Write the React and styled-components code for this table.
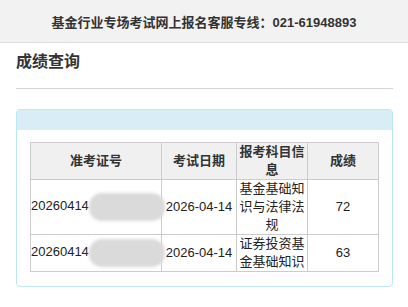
import React from "react";
import styled, { createGlobalStyle } from "styled-components";

const rows = [
  { id: "20260414", date: "2026-04-14", subject: "基金基础知识与法律法规", score: "72" },
  { id: "20260414", date: "2026-04-14", subject: "证券投资基金基础知识", score: "63" },
];

function App() {
  return (
    <>
      <GlobalStyle />
      <TopBar>基金行业专场考试网上报名客服专线：021-61948893</TopBar>
      <Page>
        <Title>成绩查询</Title>
        <Panel>
          <PanelHeading />
          <PanelBody>
            <Table>
              <colgroup>
                <col style={{ width: 131 }} />
                <col style={{ width: 75 }} />
                <col style={{ width: 71 }} />
                <col style={{ width: 71 }} />
              </colgroup>
              <thead>
                <tr>
                  <Th>准考证号</Th>
                  <Th>考试日期</Th>
                  <Th>报考科目信息</Th>
                  <Th>成绩</Th>
                </tr>
              </thead>
              <tbody>
                {rows.map((row, index) => (
                  <tr key={index}>
                    <Td $left>
                      {row.id}
                      <Redact />
                    </Td>
                    <Td>{row.date}</Td>
                    <Td>{row.subject}</Td>
                    <Td>{row.score}</Td>
                  </tr>
                ))}
              </tbody>
            </Table>
          </PanelBody>
        </Panel>
      </Page>
    </>
  );
}

export default App;

const GlobalStyle = createGlobalStyle`
  body {
    margin: 0;
    background: #ffffff;
    font-family: "Liberation Sans", "Noto Sans CJK SC", sans-serif;
    color: #333333;
  }
`;

const TopBar = styled.div`
  height: 42px;
  display: flex;
  align-items: center;
  justify-content: center;
  background: #f2f2f2;
  border-bottom: 1px solid #dddddd;
  font-size: 13px;
  font-weight: bold;
  color: #333333;
`;

const Page = styled.div`
  padding: 0 15px 0 16px;
`;

const Title = styled.h2`
  margin: 0;
  padding: 8px 0 15px;
  font-size: 16px;
  line-height: 22px;
  font-weight: bold;
  color: #333333;
  border-bottom: 1px solid #d4d4d4;
`;

const Panel = styled.div`
  margin-top: 20px;
  border: 1px solid #bce8f1;
  border-radius: 4px;
  overflow: hidden;
`;

const PanelHeading = styled.div`
  height: 19px;
  background: #d9edf7;
  border-bottom: 1px solid #d9edf7;
`;

const PanelBody = styled.div`
  padding: 12px 13px 14px;
`;

const Table = styled.table`
  width: 100%;
  table-layout: fixed;
  border-collapse: collapse;
  border: 1px solid #cccccc;
  font-size: 13px;
  line-height: 18px;
  color: #222222;
`;

const Th = styled.th`
  background: #f0f0f0;
  border: 1px solid #cccccc;
  padding: 0 2px;
  font-weight: bold;
  text-align: center;
  vertical-align: middle;
  color: #333333;
`;

const Td = styled.td`
  border: 1px solid #cccccc;
  padding: 0 ${(p) => (p.$left ? "0" : "2px")};
  text-align: ${(p) => (p.$left ? "left" : "center")};
  vertical-align: middle;
  white-space: ${(p) => (p.$left ? "nowrap" : "normal")};
  overflow: visible;
`;

const Redact = styled.span`
  display: inline-block;
  width: 76px;
  height: 28px;
  margin-right: -10px;
  vertical-align: middle;
  background: #dadada;
  border-radius: 13px;
  filter: blur(1.5px);
`;
